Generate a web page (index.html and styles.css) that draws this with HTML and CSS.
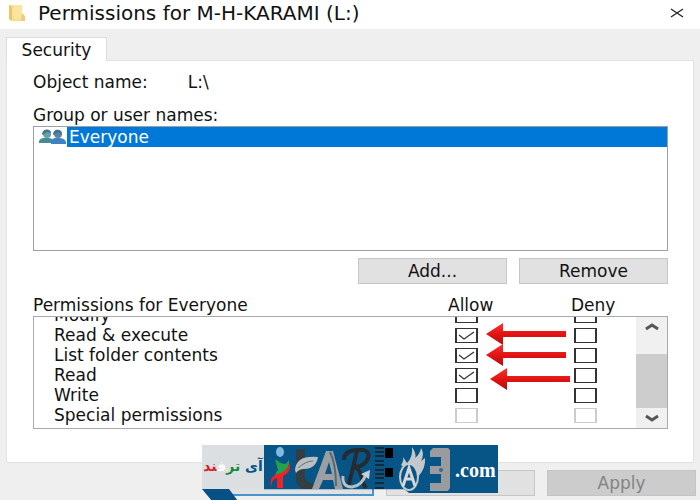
FILE: index.html
```html
<!DOCTYPE html>
<html lang="en">
<head>
<meta charset="utf-8">
<title>Permissions for M-H-KARAMI (L:)</title>
<link rel="stylesheet" href="styles.css">
</head>
<body>
<main class="dialog">
  <header class="titlebar">
    <svg class="folder" viewBox="0 0 18 18" aria-hidden="true"><path fill="#f8dd91" d="M1 1h13v9l3 3v4H3l-2-2z"/><path fill="#edc66b" d="M1 1l3 2v14l-3-2z"/><path fill="#fbe3a0" d="M5 1h9v9l-1 5H5z"/><path fill="#efcd78" d="M14 9l3 3v5h-4z"/></svg>
    <h1 class="title">Permissions for M-H-KARAMI (L:)</h1>
    <button class="close" aria-label="Close"><svg viewBox="0 0 14 10"><path d="M1 1l12 8M13 1L1 9"/></svg></button>
  </header>
  <nav class="tabs" role="tablist"><button class="tab" role="tab" aria-selected="true">Security</button></nav>
  <section class="panel">
    <div class="object"><span>Object name:</span><span>L:\</span></div>
    <h2>Group or user names:</h2>
    <div class="users">
      <button class="user">
        <svg class="people" viewBox="0 0 28 16" aria-hidden="true"><path fill="#458b98" d="M0 14c0-5 3-5 8-5s6 1 6 5z"/><circle cx="8" cy="5" r="4" fill="#64a0a8"/><path fill="#3d83c3" d="M12 15c0-6 3-6 7-6s8 1 8 5v1z"/><circle cx="19" cy="5" r="4" fill="#5b83a5"/><path fill="#41758a" d="M3 6c0-7 9-7 9-2L8 3zM14 6c0-7 9-7 9 0l-4-3z"/></svg>
        <span class="username">Everyone</span>
      </button>
    </div>
    <div class="actions"><button class="button">Add...</button><button class="button">Remove</button></div>
    <div class="heads"><h2>Permissions for Everyone</h2><span>Allow</span><span>Deny</span></div>
    <div class="permissions">
      <div class="viewport">
      <table class="grid">
        <tr><th scope="row">Modify</th><td><input type="checkbox" aria-label="Allow modify"></td><td><input type="checkbox" aria-label="Deny modify"></td></tr>
        <tr><th scope="row">Read &amp; execute</th><td><input type="checkbox" checked aria-label="Allow read and execute"></td><td><input type="checkbox" aria-label="Deny read and execute"></td></tr>
        <tr><th scope="row">List folder contents</th><td><input type="checkbox" checked aria-label="Allow list folder contents"></td><td><input type="checkbox" aria-label="Deny list folder contents"></td></tr>
        <tr><th scope="row">Read</th><td><input type="checkbox" checked aria-label="Allow read"></td><td><input type="checkbox" aria-label="Deny read"></td></tr>
        <tr><th scope="row">Write</th><td><input type="checkbox" aria-label="Allow write"></td><td><input type="checkbox" aria-label="Deny write"></td></tr>
        <tr><th scope="row">Special permissions</th><td><input type="checkbox" disabled aria-label="Allow special permissions"></td><td><input type="checkbox" disabled aria-label="Deny special permissions"></td></tr>
      </table>
      </div>
      <div class="scrollbar">
        <button class="scroll" aria-label="Scroll up"><svg viewBox="0 0 14 8"><path d="M1 6l6-4 6 4"/></svg></button>
        <div class="thumb"></div>
        <button class="scroll" aria-label="Scroll down"><svg viewBox="0 0 14 8"><path d="M1 2l6 4 6-4"/></svg></button>
      </div>
      <svg class="arrows" viewBox="0 0 84 68" aria-hidden="true">
        <defs><linearGradient id="red" x2="0" y2="1"><stop offset="0" stop-color="#ff3030"/><stop offset=".5" stop-color="#e31414"/><stop offset="1" stop-color="#b50c0c"/></linearGradient></defs>
        <g fill="url(#red)"><path d="M0 11L17 0v8h63v6H17v8z"/><path d="M0 32l17-11v8h63v6H17v8z"/><path d="M4 56l17-11v8h63v6H21v8z"/></g>
      </svg>
    </div>
  </section>
  <footer class="footer"><button class="button primary" aria-label="OK"></button><button class="button" aria-label="Cancel"></button><button class="button" disabled>Apply</button></footer>
  <div class="watermark">
    <div class="brand" dir="rtl" lang="fa"><span class="blue">آی</span> <span class="green">تر</span><span class="white">ف</span><span class="red">ند</span></div>
    <div class="logo">
      <svg class="art" viewBox="0 0 186 48" aria-hidden="true">
        <ellipse cx="16" cy="7" rx="4" ry="5" fill="#82b9dc"/>
        <path fill="#20a34a" d="M11 14q6 5 10 5 4-2 4-6 1 10-5 14l-9 7q-1-5 3-9z"/>
        <path fill="#ef2129" d="M26 18q1 10-7 13v12h-6V33q-5 0-6 10-2-12 6-14 8 0 13-11z"/>
        <path fill="#333d44" d="M32 4h9v29q2 6 11 5v6H40q-8-2-8-10z"/>
        <path fill="#b9bfc1" d="M31 25q1-15 23-13-2 12-14 12-5 0-8 4z"/><path d="M34 23q8-7 15-7" fill="none" stroke="#60727d"/>
        <path fill="#9c9fa1" d="M48 44L62 6h7l10 38h-8l-2-9H59l-4 9zM61 29h7l-3-12z"/><path d="M66 7q6 12 6 34" fill="none" stroke="#526a78" stroke-width="2"/>
        <g fill="none" stroke="#252c31" stroke-width="4"><path d="M80 15q0-9 12-10h8q8 3 2 12-5 5-12 5 6 0 9 16l3 5M93 6L84 43"/></g>
        <path d="M79 31q-1 11 9 11 10-1 14-13" fill="none" stroke="#b5c1c7" stroke-width="3"/><path fill="#c7d0d4" d="M97 29l9-4-1 9z"/>
        <path stroke="#162b38" stroke-width="2" d="M111 3h9m-9 4h9m-9 4h9m-9 5h9m-9 4h9m-9 5h9m-9 4h9m-9 4h9m-9 5h9m-9 5h9"/>
        <path d="M121 3h8v10h-8zm0 20h8v9h-8z"/>
        <path fill="#c2c8cb" d="M137 20q3-4 2-8l4 6q6-6 5-16 5 7 3 11 5-4 6-10 4 6 0 13l4-3q1 10-7 19z"/>
        <ellipse cx="145" cy="32" rx="9" ry="13" fill="#075487" stroke="#c7c9ca" stroke-width="2"/>
        <path fill="none" stroke="#d6d7d8" stroke-width="3" d="M139 41l6-18 6 18m-10-7h8"/>
        <path fill="#999b9e" d="M169 3h15l2 2v38l-2 3h-18v-8h11v-9h-11v-8h11v-9h-11V6z"/><circle cx="177" cy="25" r="2" fill="#3c6a89"/>
      </svg>
      <span class="domain">.com</span>
    </div>
    <svg class="ribbon" viewBox="0 0 36 12" aria-hidden="true"><path fill="#075085" d="M0 0h27l9 12H10z"/></svg>
  </div>
</main>
</body>
</html>
```
FILE: styles.css
```css
*{box-sizing:border-box}
body{margin:0;background:#efefef;color:#111;font:17px/20px "DejaVu Sans",sans-serif}
button{margin:0;padding:0;border:0;font:inherit;color:inherit;background:none}
h1,h2{margin:0;font:inherit}
svg{display:block}
.dialog{position:relative;display:flex;flex-direction:column;min-height:100vh}
.titlebar{display:flex;align-items:center;height:29px;padding:0 16px 4px 8px;background:#fff}
.folder{width:18px;height:18px;margin-right:12px}
.title{flex:1;font-size:20px;line-height:24px}
.close svg{width:14px;height:10px;fill:none;stroke:#222;stroke-width:1.3}
.tabs{display:flex;padding:8px 6px 0}
.tab{position:relative;z-index:1;width:101px;height:24px;margin-bottom:-1px;background:#fff;border:1px solid #ddd;border-bottom:0}
.panel{flex:1;margin:0 6px;padding:11px 25px 32px 26px;background:#fff;border:1px solid #e2e2e2}
.object{display:flex;gap:40px;margin-bottom:13px}
.users{height:125px;margin-top:1px;border:1px solid #9aa0a5}
.user{display:flex;width:100%;height:20px;text-align:left}
.people{width:28px;height:16px;margin:2px 0 0 5px}
.username{flex:1;padding-left:2px;background:#0078d7;color:#fff}
.actions{display:flex;justify-content:flex-end;gap:12px;margin-top:7px}
.button{width:149px;height:26px;background:#e1e1e1;border:1px solid #c6c6c6}
.heads{display:grid;grid-template-columns:1fr 50px 97px;gap:73px;margin-top:11px}
.heads h2{white-space:nowrap}
.permissions{position:relative;display:flex;height:113px;margin-top:1px;border:1px solid #aaa}
.viewport{flex:1;display:flex;align-items:flex-end;padding-bottom:3px;overflow:hidden}
.grid{width:100%;border-collapse:collapse;table-layout:fixed}
.grid tr{height:20px}
.grid th{padding:0 0 0 20px;text-align:left;font-weight:400}
.grid td{width:119px;padding:0}
.grid td:last-child{width:62px}
.grid input{appearance:none;display:block;width:23px;height:15px;margin:0;border:2px solid #333;border-width:1px 2px;background:#fff}
.grid input:checked{background:url("data:image/svg+xml,%3Csvg xmlns='http://www.w3.org/2000/svg' viewBox='0 0 19 13'%3E%3Cpath d='M2 6l5 4 10-7' fill='none' stroke='%23333' stroke-width='1.3'/%3E%3C/svg%3E") center/100% 100%}
.grid input:disabled{border-color:#ccc}
.scrollbar{display:flex;flex-direction:column;width:31px;background:#f0f0f0}
.scroll{display:flex;align-items:center;justify-content:center;height:20px}
.scroll svg{width:14px;height:8px;fill:none;stroke:#555;stroke-width:3}
.thumb{height:54px;margin-top:17px;background:#cdcdcd}
.arrows{position:absolute;top:6px;right:97px;width:84px;height:68px}
.footer{display:flex;justify-content:flex-end;gap:12px;padding:7px 4px 4px}
.button:disabled{background:#ccc;border-color:#c4c4c4;color:#838383}
.primary{border:2px solid #4a94cc}
.watermark{position:absolute;left:202px;bottom:7px;display:flex;height:48px}
.brand{width:62px;height:44px;background:#dcdfe1;font-weight:700;font-size:14px;line-height:42px;text-align:center;white-space:nowrap}
.blue{color:#075487}
.green{color:#178a38}
.white{color:#fff}
.red{color:#d51d2b}
.logo{display:flex;width:234px;background:#075487;clip-path:polygon(0 0,100% 0,100% 100%,62% 100%,60% 92%,0 92%)}
.art{width:186px;height:48px}
.domain{padding-left:5px;color:#fff;font:700 20px/50px "Liberation Serif",serif}
.ribbon{position:absolute;left:0;top:44px;width:36px;height:12px}
```
